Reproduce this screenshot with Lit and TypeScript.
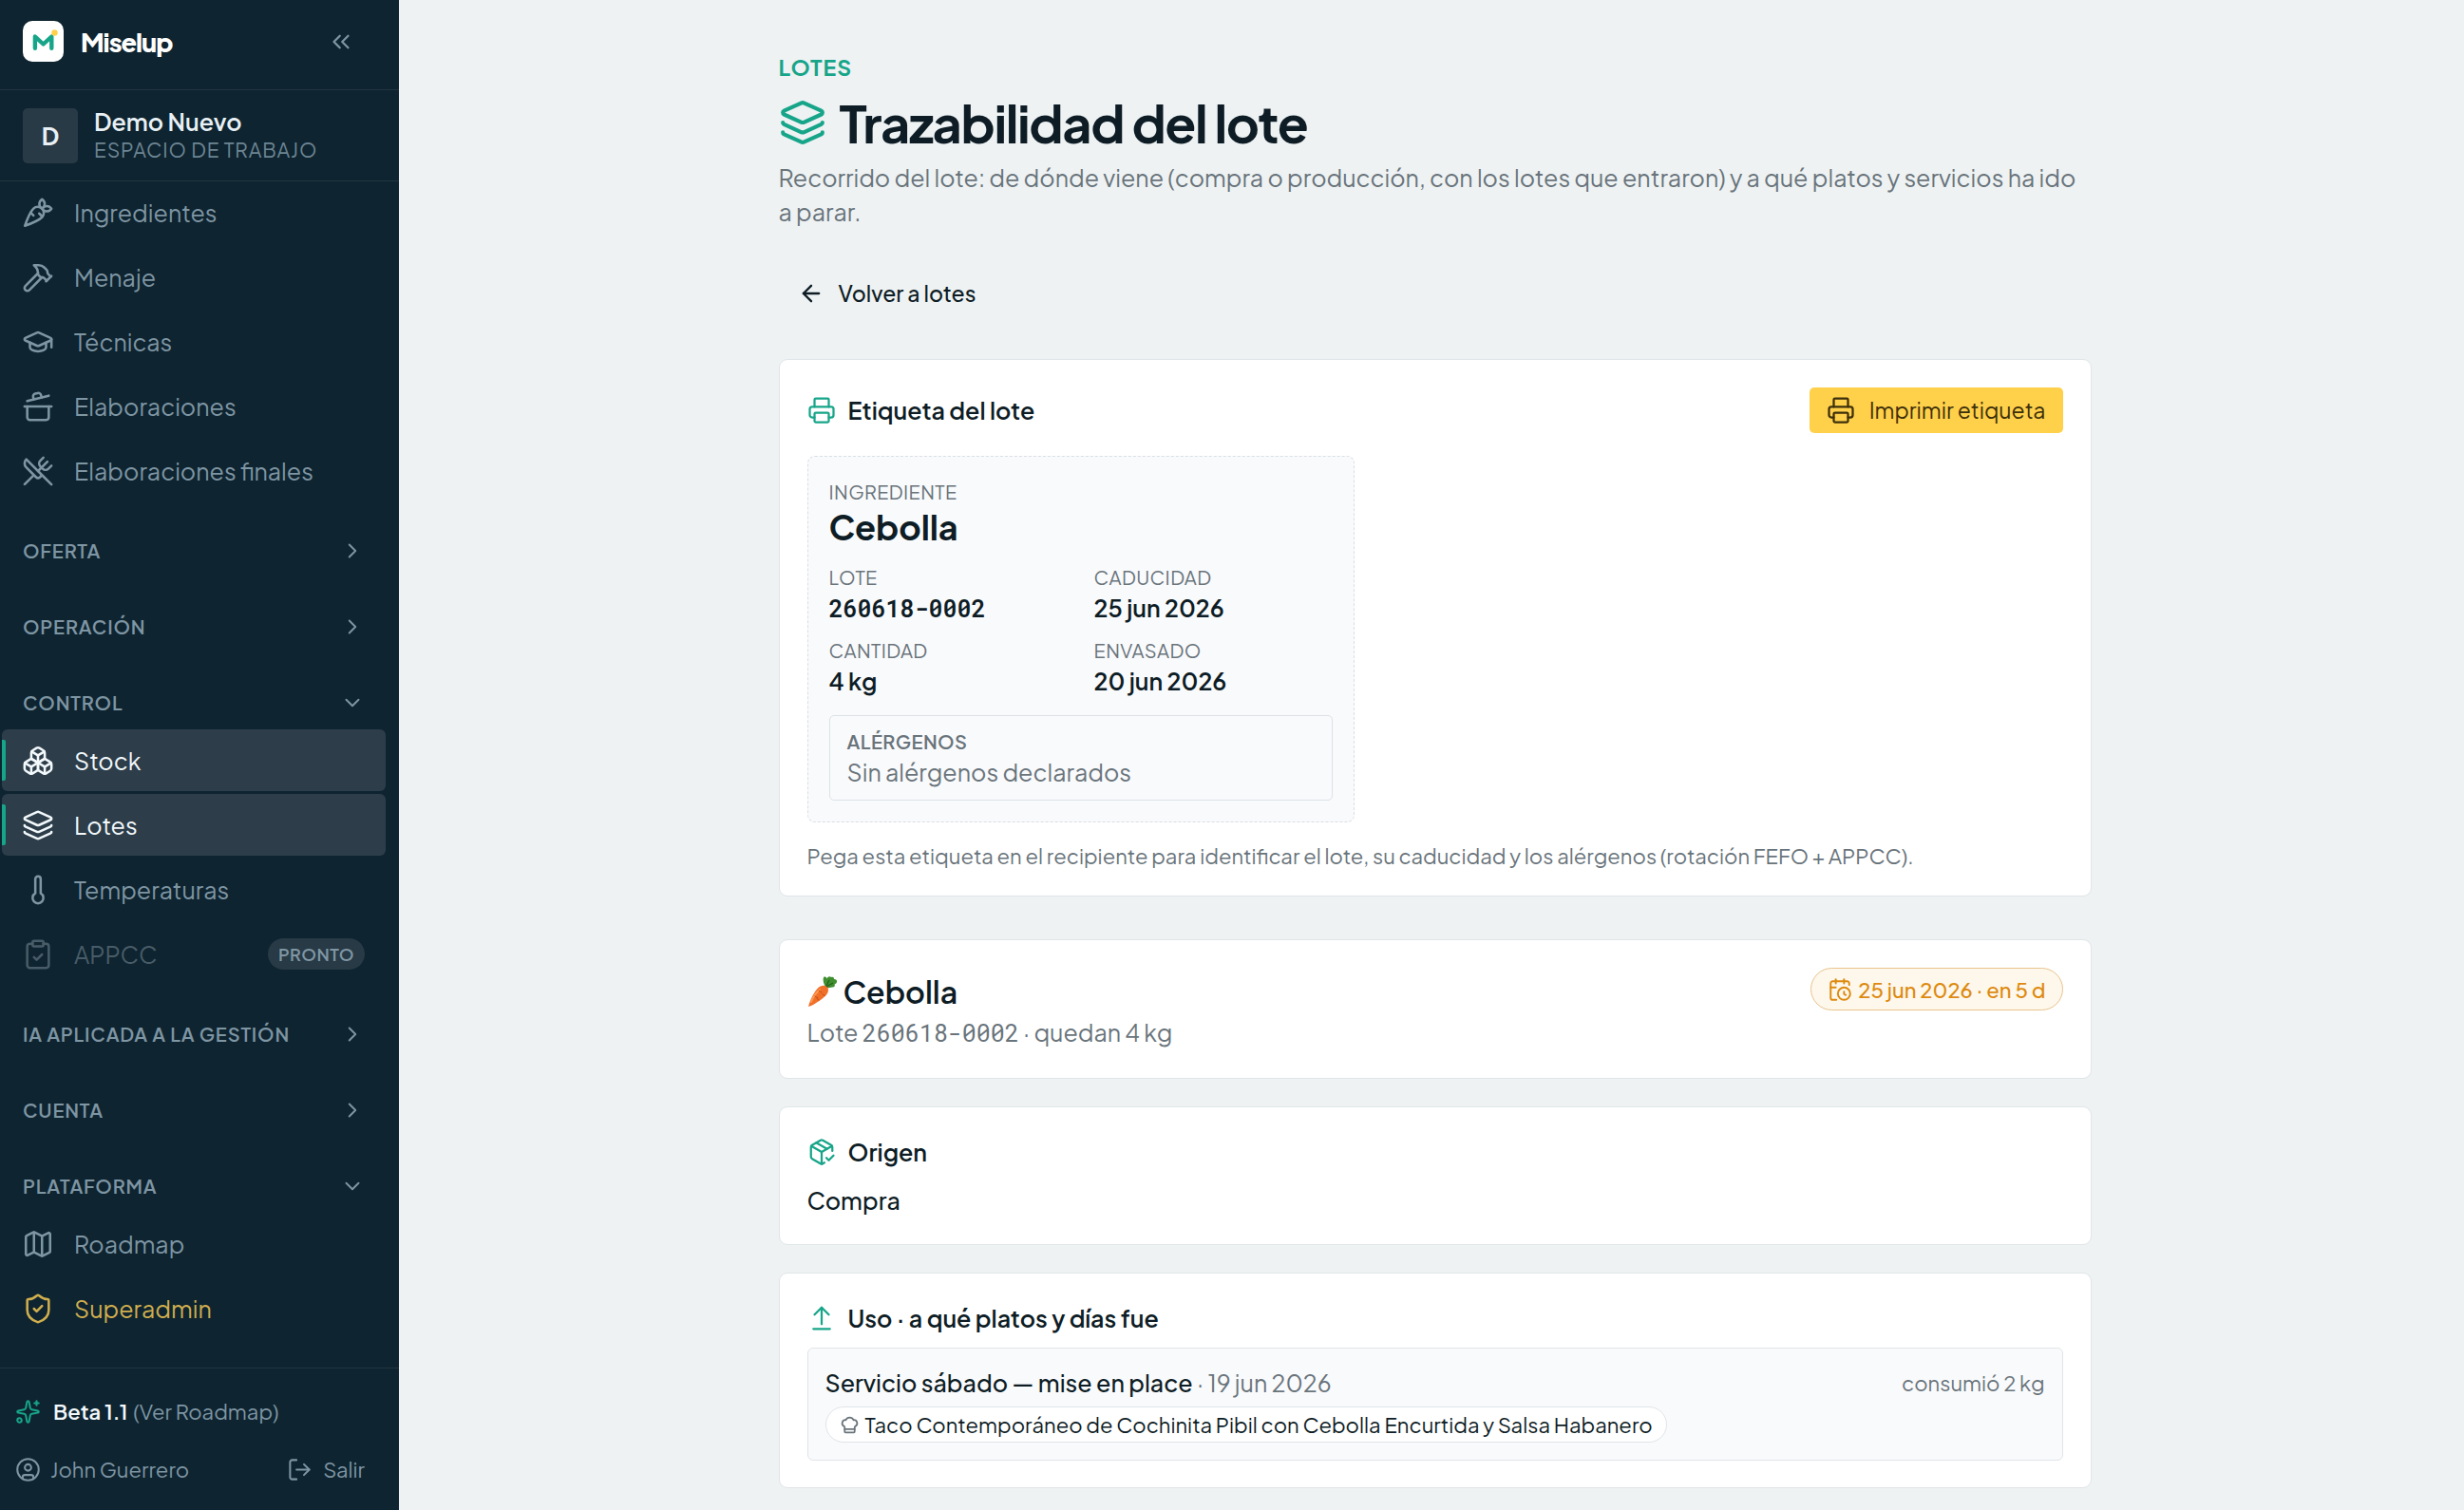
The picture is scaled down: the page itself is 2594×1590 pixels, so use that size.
import { LitElement, html, svg, css, nothing } from "lit";
import { customElement, property } from "lit/decorators.js";
import { classMap } from "lit/directives/class-map.js";

const ICONS: Record<string, unknown> = {
  carrot: svg`<path d="M2.27 21.7s9.87-3.5 12.73-6.36a4.5 4.5 0 0 0-6.36-6.37C5.77 11.84 2.27 21.7 2.27 21.7zM8.64 14l-2.05-2.04M15.34 15l-2.46-2.46"/><path d="M22 9s-1.33-2-3.5-2C16.86 7 15 9 15 9s1.33 2 3.5 2S22 9 22 9z"/><path d="M15 2s-2 1.33-2 3.5S15 9 15 9s2-1.84 2-3.5C17 3.33 15 2 15 2z"/>`,
  hammer: svg`<path d="m15 12-9.373 9.373a1 1 0 0 1-3.001-3L12 9"/><path d="m18 15 4-4"/><path d="m21.5 11.5-1.914-1.914A2 2 0 0 1 19 8.172v-.344a2 2 0 0 0-.586-1.414l-1.657-1.657A6 6 0 0 0 12.516 3H9l1.243 1.243A6 6 0 0 1 12 8.485V10l2 2h1.172a2 2 0 0 1 1.414.586L18.5 14.5"/>`,
  cap: svg`<path d="M21.42 10.922a1 1 0 0 0-.019-1.838L12.83 5.18a2 2 0 0 0-1.66 0L2.6 9.08a1 1 0 0 0 0 1.832l8.57 3.908a2 2 0 0 0 1.66 0z"/><path d="M22 10v6"/><path d="M6 12.5V16a6 3 0 0 0 12 0v-3.5"/>`,
  pot: svg`<path d="M2 12h20"/><path d="M20 12v8a2 2 0 0 1-2 2H6a2 2 0 0 1-2-2v-8"/><path d="m4 8 16-4"/><path d="m8.86 6.78-.45-1.81a2 2 0 0 1 1.45-2.43l1.94-.48a2 2 0 0 1 2.43 1.46l.45 1.8"/>`,
  utensils: svg`<path d="m16 2-2.3 2.3a3 3 0 0 0 0 4.2l1.8 1.8a3 3 0 0 0 4.2 0L22 8"/><path d="M15 15 3.3 3.3a4.2 4.2 0 0 0 0 6l7.3 7.3c.7.7 2 .7 2.8 0L15 15Zm0 0 7 7"/><path d="m2.1 21.8 6.4-6.3"/><path d="m19 5-7 7"/>`,
  boxes: svg`<path d="M2.97 12.92A2 2 0 0 0 2 14.63v3.24a2 2 0 0 0 .97 1.71l3 1.8a2 2 0 0 0 2.06 0L12 19v-5.5l-5-3-4.03 2.42Z"/><path d="m7 16.5-4.74-2.85"/><path d="m7 16.5 5-3"/><path d="M7 16.5v5.17"/><path d="M12 13.5V19l3.97 2.38a2 2 0 0 0 2.06 0l3-1.8a2 2 0 0 0 .97-1.71v-3.24a2 2 0 0 0-.97-1.71L17 10.5l-5 3Z"/><path d="m17 16.5-5-3"/><path d="m17 16.5 4.74-2.85"/><path d="M17 16.5v5.17"/><path d="M7.97 4.42A2 2 0 0 0 7 6.13v4.37l5 3 5-3V6.13a2 2 0 0 0-.97-1.71l-3-1.8a2 2 0 0 0-2.06 0l-3 1.8Z"/><path d="M12 8 7.26 5.15"/><path d="m12 8 4.74-2.85"/><path d="M12 13.5V8"/>`,
  layers: svg`<path d="M12.83 2.18a2 2 0 0 0-1.66 0L2.6 6.08a1 1 0 0 0 0 1.83l8.58 3.91a2 2 0 0 0 1.66 0l8.58-3.9a1 1 0 0 0 0-1.83z"/><path d="M2 12a1 1 0 0 0 .58.91l8.6 3.91a2 2 0 0 0 1.65 0l8.58-3.9A1 1 0 0 0 22 12"/><path d="M2 17a1 1 0 0 0 .58.91l8.6 3.91a2 2 0 0 0 1.65 0l8.58-3.9A1 1 0 0 0 22 17"/>`,
  thermometer: svg`<path d="M14 4v10.54a4 4 0 1 1-4 0V4a2 2 0 0 1 4 0Z"/>`,
  clipboard: svg`<rect width="8" height="4" x="8" y="2" rx="1"/><path d="M16 4h2a2 2 0 0 1 2 2v14a2 2 0 0 1-2 2H6a2 2 0 0 1-2-2V6a2 2 0 0 1 2-2h2"/><path d="m9 14 2 2 4-4"/>`,
  map: svg`<path d="M14.106 5.553a2 2 0 0 0 1.788 0l3.659-1.83A1 1 0 0 1 21 4.619v12.764a1 1 0 0 1-.553.894l-4.553 2.277a2 2 0 0 1-1.788 0l-4.212-2.106a2 2 0 0 0-1.788 0l-3.659 1.83A1 1 0 0 1 3 19.381V6.618a1 1 0 0 1 .553-.894l4.553-2.277a2 2 0 0 1 1.788 0z"/><path d="M15 5.764v15"/><path d="M9 3.236v15"/>`,
  shield: svg`<path d="M20 13c0 5-3.5 7.5-7.66 8.95a1 1 0 0 1-.67-.01C7.5 20.5 4 18 4 13V6a1 1 0 0 1 1-1c2 0 4.5-1.2 6.24-2.72a1.17 1.17 0 0 1 1.52 0C14.51 3.81 17 5 19 5a1 1 0 0 1 1 1z"/><path d="m9 12 2 2 4-4"/>`,
  sparkles: svg`<path d="M11.017 2.814a1 1 0 0 1 1.966 0l1.051 5.558a2 2 0 0 0 1.594 1.594l5.558 1.051a1 1 0 0 1 0 1.966l-5.558 1.051a2 2 0 0 0-1.594 1.594l-1.051 5.558a1 1 0 0 1-1.966 0l-1.051-5.558a2 2 0 0 0-1.594-1.594l-5.558-1.051a1 1 0 0 1 0-1.966l5.558-1.051a2 2 0 0 0 1.594-1.594z"/><path d="M20 2v4"/><path d="M22 4h-4"/><circle cx="4" cy="20" r="2"/>`,
  user: svg`<circle cx="12" cy="12" r="10"/><circle cx="12" cy="10" r="3"/><path d="M7 20.662V19a2 2 0 0 1 2-2h6a2 2 0 0 1 2 2v1.662"/>`,
  logout: svg`<path d="m16 17 5-5-5-5"/><path d="M21 12H9"/><path d="M9 21H5a2 2 0 0 1-2-2V5a2 2 0 0 1 2-2h4"/>`,
  printer: svg`<path d="M6 18H4a2 2 0 0 1-2-2v-5a2 2 0 0 1 2-2h16a2 2 0 0 1 2 2v5a2 2 0 0 1-2 2h-2"/><path d="M6 9V3a1 1 0 0 1 1-1h10a1 1 0 0 1 1 1v6"/><rect x="6" y="14" width="12" height="8" rx="1"/>`,
  calendar: svg`<path d="M16 14v2.2l1.6 1"/><path d="M16 2v4"/><path d="M21 7.5V6a2 2 0 0 0-2-2H5a2 2 0 0 0-2 2v14a2 2 0 0 0 2 2h3.5"/><path d="M3 10h5"/><path d="M8 2v4"/><circle cx="16" cy="16" r="6"/>`,
  package: svg`<path d="M12 22V12"/><path d="m16 17 2 2 4-4"/><path d="M21 11.127V8a2 2 0 0 0-1-1.73l-7-4a2 2 0 0 0-2 0l-7 4A2 2 0 0 0 3 8v8a2 2 0 0 0 1 1.729l7 4a2 2 0 0 0 2 .001l1.32-.753"/><path d="M3.29 7 12 12l8.71-5"/><path d="m7.5 4.27 8.997 5.148"/>`,
  upload: svg`<path d="m18 9-6-6-6 6"/><path d="M12 3v14"/><path d="M5 21h14"/>`,
  chef: svg`<path d="M17 21a1 1 0 0 0 1-1v-5.35c0-.457.316-.844.727-1.041a4 4 0 0 0-2.134-7.589 5 5 0 0 0-9.186 0 4 4 0 0 0-2.134 7.588c.411.198.727.585.727 1.041V20a1 1 0 0 0 1 1Z"/><path d="M6 17h12"/>`,
  back: svg`<path d="m12 19-7-7 7-7"/><path d="M19 12H5"/>`,
  collapse: svg`<path d="m11 17-5-5 5-5"/><path d="m18 17-5-5 5-5"/>`,
  right: svg`<path d="m9 18 6-6-6-6"/>`,
  down: svg`<path d="m6 9 6 6 6-6"/>`,
};

@customElement("line-icon")
export class LineIcon extends LitElement {
  @property() name = "";

  static styles = css`
    :host { display: block; flex: none; width: 30px; height: 30px; }
    .glyph { display: block; width: 100%; height: 100%; fill: none; stroke: currentColor; stroke-width: var(--icon-stroke, 1.8); stroke-linecap: round; stroke-linejoin: round; }
  `;

  render() {
    return html`<svg class="glyph" viewBox="0 0 24 24" aria-hidden="true">${ICONS[this.name]}</svg>`;
  }
}

interface Entry {
  label: string;
  icon: string;
  active?: boolean;
  soon?: boolean;
  gold?: boolean;
}
interface Section {
  title?: string;
  open?: boolean;
  entries: Entry[];
}

const SECTIONS: Section[] = [
  {
    entries: [
      { label: "Ingredientes", icon: "carrot" },
      { label: "Menaje", icon: "hammer" },
      { label: "Técnicas", icon: "cap" },
      { label: "Elaboraciones", icon: "pot" },
      { label: "Elaboraciones finales", icon: "utensils" },
    ],
  },
  { title: "Oferta", entries: [] },
  { title: "Operación", entries: [] },
  {
    title: "Control",
    open: true,
    entries: [
      { label: "Stock", icon: "boxes", active: true },
      { label: "Lotes", icon: "layers", active: true },
      { label: "Temperaturas", icon: "thermometer" },
      { label: "APPCC", icon: "clipboard", soon: true },
    ],
  },
  { title: "IA aplicada a la gestión", entries: [] },
  { title: "Cuenta", entries: [] },
  {
    title: "Plataforma",
    open: true,
    entries: [
      { label: "Roadmap", icon: "map" },
      { label: "Superadmin", icon: "shield", gold: true },
    ],
  },
];

@customElement("app-sidebar")
export class AppSidebar extends LitElement {
  static styles = css`
    :host { display: flex; flex-direction: column; box-sizing: border-box; width: 420px; height: 100vh; flex: none; position: sticky; top: 0; background: #0e2430; color: #7e95a3; font-size: 25px; line-height: 32px; }
    button { font: inherit; color: inherit; background: none; border: 0; padding: 0; cursor: pointer; }
    a { color: inherit; text-decoration: none; }
    .brand { display: flex; align-items: center; gap: 18px; padding: 22px 46px 29px 24px; border-bottom: 1px solid #21353f; }
    .logo { display: block; width: 43px; height: 43px; flex: none; }
    .brand-name { flex: 1; color: #fff; font-size: 27px; font-weight: 800; letter-spacing: -1px; }
    .workspace { display: flex; align-items: center; gap: 17px; padding: 19px 24px 18px; border-bottom: 1px solid #21353f; }
    .avatar { display: grid; place-items: center; width: 58px; height: 58px; border-radius: 5px; background: #283a46; color: #e8f0f5; font-weight: 700; }
    .who { display: flex; flex-direction: column; line-height: 29px; }
    .who-name { color: #e8f0f5; font-weight: 600; }
    .who-kind { font-size: 21px; text-transform: uppercase; letter-spacing: 0.04em; color: #6d8493; }
    .nav { flex: 1; min-height: 0; overflow: hidden; display: flex; flex-direction: column; gap: 27px; }
    .section { display: flex; flex-direction: column; gap: 3px; }
    .section-head { display: flex; align-items: center; justify-content: space-between; height: 50px; padding: 0 36px 0 24px; font-size: 20px; font-weight: 600; text-transform: uppercase; letter-spacing: 0.04em; }
    .section-head line-icon { width: 26px; height: 26px; }
    .entries { display: flex; flex-direction: column; gap: 3px; margin: 0; padding: 0; list-style: none; }
    .entry { display: flex; align-items: center; gap: 21px; height: 65px; box-sizing: border-box; margin: 0 14px 0 2px; padding: 0 22px 0 21px; border-radius: 6px; }
    .entry line-icon { width: 34px; height: 34px; }
    .entry.active { position: relative; background: #2d3e4a; color: #f2f8fb; }
    .entry.active::before { content: ""; position: absolute; left: 0; top: 11px; bottom: 11px; width: 4px; border-radius: 0 2px 2px 0; background: #17a589; }
    .entry.gold { color: #cfae4e; }
    .entry.soon { color: #485c68; }
    .soon-tag { margin-left: auto; padding: 0 11px; border-radius: 17px; background: #273a46; color: #8096a3; font-size: 18px; line-height: 33px; font-weight: 600; letter-spacing: 0.025em; }
    .foot { display: flex; flex-direction: column; gap: 29px; padding: 29px 36px 27px 16px; border-top: 1px solid #21353f; font-size: 22px; }
    .foot line-icon { width: 27px; height: 27px; }
    .foot-row { display: flex; align-items: center; gap: 10px; }
    .release { display: flex; align-items: center; gap: 6px; }
    .release line-icon { color: #17a589; margin-right: 7px; }
    .version { color: #f2f8fb; font-weight: 600; }
    .exit { display: flex; align-items: center; gap: 11px; margin-left: auto; }
  `;

  private entry(e: Entry) {
    const classes = classMap({ entry: true, active: !!e.active, soon: !!e.soon, gold: !!e.gold });
    return html`<li><a class=${classes} href="#"><line-icon name=${e.icon}></line-icon><span>${e.label}</span>${e.soon ? html`<span class="soon-tag">PRONTO</span>` : nothing}</a></li>`;
  }

  render() {
    return html`
      <div class="brand">
        <svg class="logo" viewBox="0 0 43 43" aria-hidden="true">
          <rect width="43" height="43" rx="10" fill="#fff"/>
          <path d="M12.900 28.800V16.500l8.700 8L30.300 16.500V28.800" fill="none" stroke="#17a589" stroke-width="4.400" stroke-linecap="round" stroke-linejoin="round"/>
          <circle cx="33.500" cy="12.500" r="3.200" fill="#ffd04a"/>
        </svg>
        <span class="brand-name">Miselup</span>
        <button type="button" aria-label="Contraer menú"><line-icon name="collapse"></line-icon></button>
      </div>
      <div class="workspace">
        <span class="avatar">D</span>
        <div class="who"><span class="who-name">Demo Nuevo</span><span class="who-kind">Espacio de trabajo</span></div>
      </div>
      <nav class="nav">
        ${SECTIONS.map(
          (s) => html`<div class="section">
            ${s.title
              ? html`<button type="button" class="section-head" aria-expanded=${s.open ? "true" : "false"}><span>${s.title}</span><line-icon name=${s.open ? "down" : "right"}></line-icon></button>`
              : nothing}
            <ul class="entries">${s.entries.map((e) => this.entry(e))}</ul>
          </div>`
        )}
      </nav>
      <div class="foot">
        <a class="release" href="#"><line-icon name="sparkles"></line-icon><span class="version">Beta 1.1</span><span>(Ver Roadmap)</span></a>
        <div class="foot-row">
          <line-icon name="user"></line-icon><span>John Guerrero</span>
          <button type="button" class="exit"><line-icon name="logout"></line-icon><span>Salir</span></button>
        </div>
      </div>
    `;
  }
}

@customElement("app-root")
export class AppRoot extends LitElement {
  static styles = css`
    :host { display: flex; align-items: flex-start; min-height: 100vh; background: #eef2f3; color: #0e1d25; font-family: "Plus Jakarta Sans", Inter, "Liberation Sans", sans-serif; font-size: 25px; line-height: 36px; }
    h1, h2, h3, p, dl, dd { margin: 0; }
    a { color: inherit; text-decoration: none; }
    .main { flex: 1; min-width: 0; padding: 53px 36px 22px 43px; }
    .column { display: flex; flex-direction: column; max-width: 1382px; margin: 0 auto; }
    .eyebrow { color: #17a589; font-size: 23px; font-weight: 700; letter-spacing: 1px; text-transform: uppercase; }
    .title { display: flex; align-items: center; gap: 14px; margin-top: 4px; font-size: 54px; line-height: 72px; font-weight: 700; letter-spacing: -0.025em; }
    .title line-icon { --icon-stroke: 2; width: 50px; height: 50px; color: #17a589; }
    .muted { color: #69747b; }
    .lede { margin-top: 4px; }
    .back { display: flex; align-items: center; gap: 15px; align-self: flex-start; height: 58px; margin-top: 39px; padding: 0 20px; font-size: 23px; font-weight: 500; }
    .back line-icon { --icon-stroke: 2; width: 28px; height: 28px; }
    .card { display: flex; flex-direction: column; padding: 29px 29px 28px; background: #fff; border: 1px solid #e0e5e8; border-radius: 9px; }
    .card + .card { margin-top: 29px; }
    .back + .card { margin-top: 40px; }
    .label-card + .card { margin-top: 45px; }
    .row { display: flex; align-items: center; justify-content: space-between; }
    .card-title { display: flex; align-items: center; gap: 13px; font-size: 25px; line-height: 36px; font-weight: 600; }
    .card-title line-icon { color: #17a589; }
    .print { display: flex; align-items: center; gap: 15px; height: 48px; padding: 0 18px; border: 0; border-radius: 5px; background: #ffd04a; color: #3d2f0a; font: inherit; font-size: 23px; cursor: pointer; }
    .label { display: flex; flex-direction: column; box-sizing: border-box; width: 576px; margin-top: 24px; padding: 22px; background: #f9fafc; border: 1px dashed #d9dfe4; border-radius: 8px; }
    .kind { font-size: 20px; line-height: 30px; letter-spacing: 0.02em; text-transform: uppercase; color: #69747b; }
    .product { font-size: 36px; line-height: 44px; font-weight: 700; }
    .facts { display: grid; grid-template-columns: 1fr 1fr; gap: 12px 28px; margin-top: 16px; }
    .facts dd { line-height: 35px; font-weight: 600; }
    .mono { font-family: "SF Mono", "Roboto Mono", "JetBrains Mono", "DejaVu Sans Mono", monospace; }
    .allergens { margin-top: 18px; padding: 12px 18px; border: 1px solid #dde2e6; border-radius: 5px; line-height: 34px; }
    .allergens .kind { font-weight: 600; }
    .hint { margin-top: 21px; font-size: 22px; line-height: 28px; }
    .summary { padding-bottom: 29px; }
    .summary .row { align-items: flex-start; }
    .lot-name { display: flex; align-items: center; gap: 6px; font-size: 32px; line-height: 50px; font-weight: 600; }
    .veg { display: block; width: 32px; height: 34px; }
    .expiry { display: flex; align-items: center; gap: 6px; height: 43px; padding: 0 17px; border: 1px solid #e9c48d; border-radius: 23px; background: #fdf7ec; color: #dd8a0f; font-size: 22px; font-weight: 500; }
    .expiry line-icon { width: 26px; height: 26px; }
    .origin { margin-top: 15px; font-weight: 500; }
    .service { margin-top: 13px; padding: 18px; background: #f9fafc; border: 1px solid #e0e5e8; border-radius: 6px; }
    .service-name { font-weight: 500; }
    .service-name .muted { font-weight: 400; }
    .amount { font-size: 22px; }
    .dish { display: inline-flex; align-items: center; gap: 6px; height: 36px; margin-top: 7px; padding: 0 14px; background: #fff; border: 1px solid #e0e5e8; border-radius: 19px; font-size: 22px; }
    .dish line-icon { --icon-stroke: 2; width: 21px; height: 21px; color: #69747b; }
  `;

  render() {
    return html`
      <app-sidebar></app-sidebar>
      <main class="main">
        <div class="column">
          <p class="eyebrow">Lotes</p>
          <h1 class="title"><line-icon name="layers"></line-icon><span>Trazabilidad del lote</span></h1>
          <p class="lede muted">Recorrido del lote: de dónde viene (compra o producción, con los lotes que entraron) y a qué platos y servicios ha ido a parar.</p>
          <a class="back" href="#"><line-icon name="back"></line-icon><span>Volver a lotes</span></a>

          <section class="card label-card">
            <div class="row">
              <h2 class="card-title"><line-icon name="printer"></line-icon><span>Etiqueta del lote</span></h2>
              <button type="button" class="print"><line-icon name="printer"></line-icon><span>Imprimir etiqueta</span></button>
            </div>
            <div class="label">
              <p class="kind">Ingrediente</p>
              <h3 class="product">Cebolla</h3>
              <dl class="facts">
                <div><dt class="kind">Lote</dt><dd class="mono">260618-0002</dd></div>
                <div><dt class="kind">Caducidad</dt><dd>25 jun 2026</dd></div>
                <div><dt class="kind">Cantidad</dt><dd>4 kg</dd></div>
                <div><dt class="kind">Envasado</dt><dd>20 jun 2026</dd></div>
              </dl>
              <div class="allergens"><p class="kind">Alérgenos</p><p class="muted">Sin alérgenos declarados</p></div>
            </div>
            <p class="hint muted">Pega esta etiqueta en el recipiente para identificar el lote, su caducidad y los alérgenos (rotación FEFO + APPCC).</p>
          </section>

          <section class="card summary">
            <div class="row">
              <h2 class="lot-name">
                <svg class="veg" viewBox="0 0 32 34" aria-hidden="true">
                  <path d="M19 12C17 9 16 5 17 2c2-1 3 0 3.500 1.500C21.500 1 24 .5 25 2c2-.5 3 0 3 2 2 0 3.500 1 3 3-.5 2-2 2-2.500 2.500 1 1.500 0 3-2 3-2 .5-4 .5-5.500 1z" fill="#3f8f2f"/>
                  <path d="M19.500 12 23 5M20 12l7-4" stroke="#245f1c" stroke-width="1.200" fill="none"/>
                  <path d="M1.200 33C1 31 5 20 11 13.500c3-3 7-3.500 9.500-1.500 2.500 2.500 1.500 6-.5 8.500C14.500 26.500 4 32.500 1.200 33z" fill="#f0702a"/>
                  <path d="M4 28c2-5 5.500-10 9-13" stroke="#ff9a52" stroke-width="1.800" fill="none" stroke-linecap="round"/>
                  <path d="m12 16 3 2M8 22l3 2M16 20l2.500 1.500M12 26l-2-1.500" stroke="#c44e12" stroke-width="1" fill="none" stroke-linecap="round"/>
                </svg>
                <span>Cebolla</span>
              </h2>
              <span class="expiry"><line-icon name="calendar"></line-icon><span>25 jun 2026 · en 5 d</span></span>
            </div>
            <p class="muted">Lote <span class="mono">260618-0002</span> · quedan 4 kg</p>
          </section>

          <section class="card">
            <h2 class="card-title"><line-icon name="package"></line-icon><span>Origen</span></h2>
            <p class="origin">Compra</p>
          </section>

          <section class="card">
            <h2 class="card-title"><line-icon name="upload"></line-icon><span>Uso · a qué platos y días fue</span></h2>
            <div class="service">
              <div class="row">
                <p class="service-name">Servicio sábado — mise en place <span class="muted">· 19 jun 2026</span></p>
                <span class="amount muted">consumió 2 kg</span>
              </div>
              <a class="dish" href="#"><line-icon name="chef"></line-icon><span>Taco Contemporáneo de Cochinita Pibil con Cebolla Encurtida y Salsa Habanero</span></a>
            </div>
          </section>
        </div>
      </main>
    `;
  }
}
